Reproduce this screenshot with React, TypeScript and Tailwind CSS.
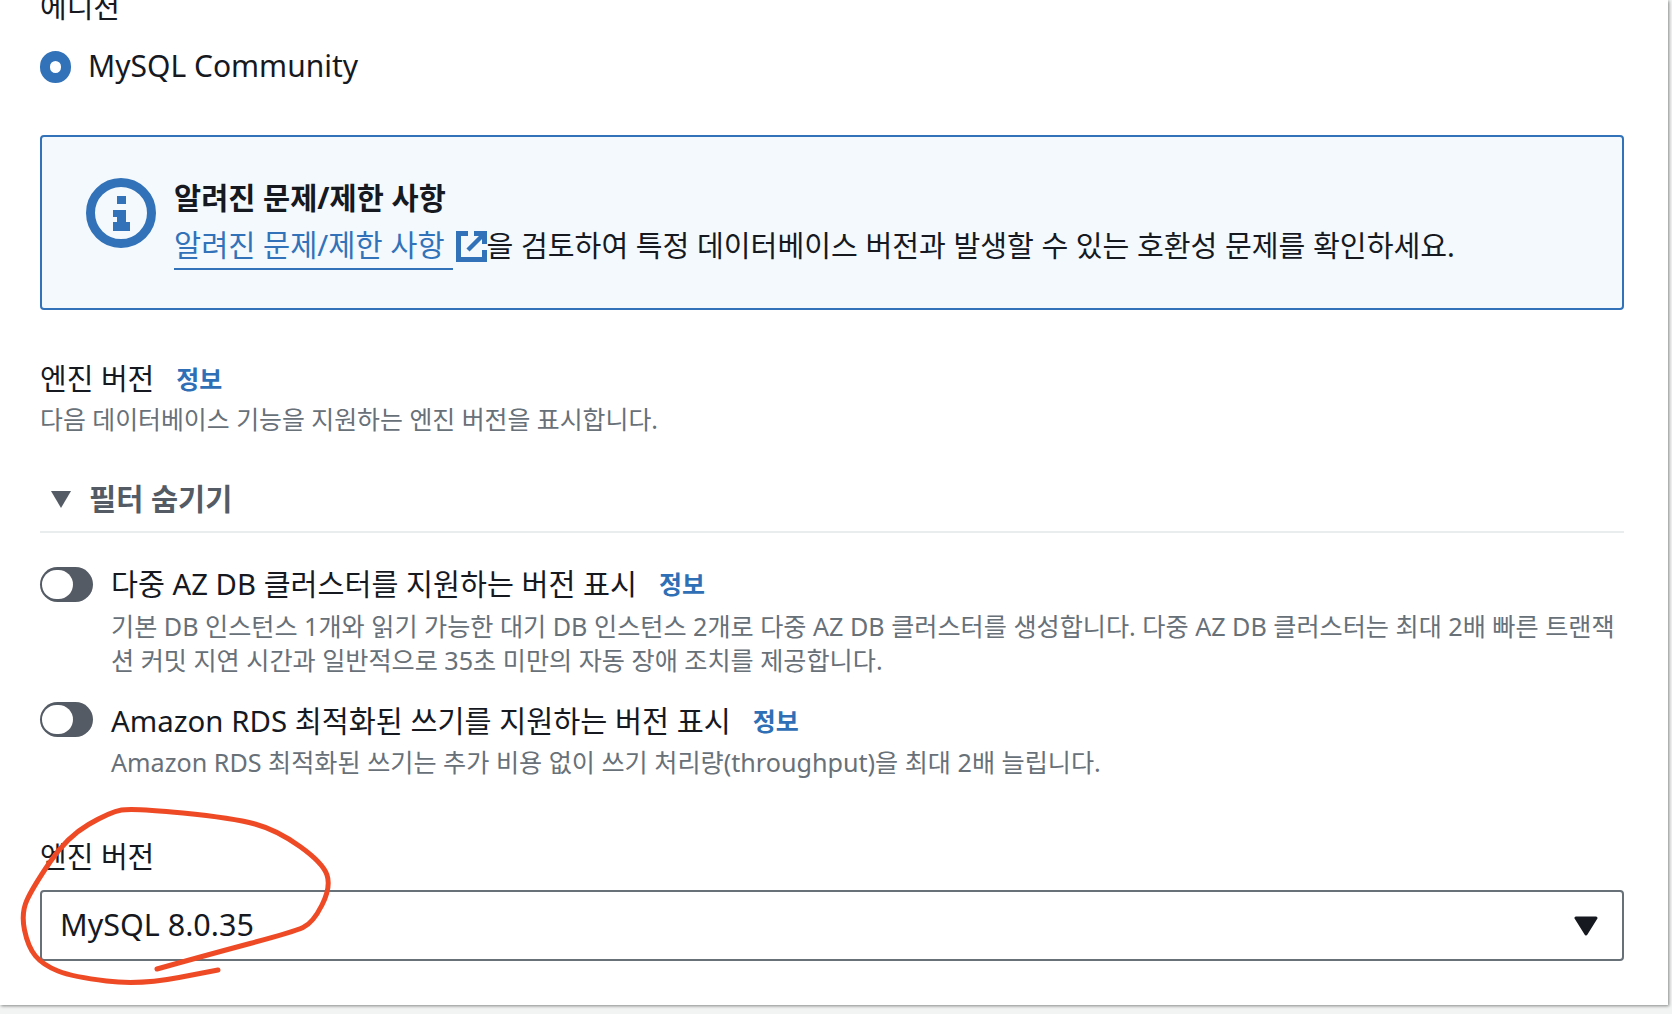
const FONT = "font-['Noto_Sans','Noto_Sans_CJK_KR',sans-serif]"

const SCRIBBLE: [number, number][] = [
  [157, 969], [207, 955], [293, 932], [313, 923], [331, 887], [323, 863], [277, 830], [233, 818],
  [133, 808], [110, 812], [67, 837], [33, 887], [21, 913], [28, 947], [43, 965], [73, 977], [140, 985], [218, 970],
]

function scribblePath(points: [number, number][]) {
  let d = `M${points[0][0]} ${points[0][1]}`
  for (let i = 1; i < points.length - 1; i++) {
    const [x, y] = points[i]
    const [nx, ny] = points[i + 1]
    d += ` Q${x} ${y} ${(x + nx) / 2} ${(y + ny) / 2}`
  }
  const last = points[points.length - 1]
  return d + ` L${last[0]} ${last[1]}`
}

function Info() {
  return <span className="text-[25px] leading-none font-bold text-[#2f6fb5]">정보</span>
}

function Toggle() {
  return (
    <div className="w-[53px] h-[35px] rounded-full bg-[#545b64] flex items-center pl-[2px] shrink-0">
      <div className="w-[31px] h-[29px] rounded-full bg-white" />
    </div>
  )
}

function InfoIcon() {
  return (
    <svg width="70" height="70" viewBox="0 0 70 70" className="shrink-0">
      <circle cx="35" cy="35" r="30.5" fill="none" stroke="#3272b8" strokeWidth="9" />
      <rect x="31" y="18" width="9" height="8" fill="#3272b8" />
      <rect x="27" y="32" width="13" height="7" fill="#3272b8" />
      <rect x="31" y="36" width="9" height="10" fill="#3272b8" />
      <rect x="27" y="44" width="17" height="9" fill="#3272b8" />
    </svg>
  )
}

function ExternalIcon() {
  return (
    <svg width="31" height="31" viewBox="0 0 31 31" className="block shrink-0">
      <path d="M12 2.5H2.5v26h26V19" fill="none" stroke="#3272b8" strokeWidth="5" />
      <path d="M18 2.5h10.5V13" fill="none" stroke="#3272b8" strokeWidth="5" />
      <path d="M27 4 12 19" fill="none" stroke="#3272b8" strokeWidth="4.5" />
    </svg>
  )
}

export default function App() {
  return (
    <div className={`relative w-[1672px] h-[1014px] overflow-hidden bg-[#f2f3f3] text-[#16191f] ${FONT}`}>
      <div className="w-[1668px] h-[1005px] bg-white shadow-[1px_1px_3px_rgba(0,0,0,0.45)] pl-[40px] pr-[44px] overflow-hidden">
        <div className="text-[29px] leading-[40px] -mt-[13px]">에디션</div>

        <div className="flex items-center gap-[17px] mt-[20px] h-[40px]">
          <div className="w-[31px] h-[32px] rounded-full border-[10px] border-[#3272b8] bg-white" />
          <div className="text-[30px] leading-[40px] -mt-[2px]">MySQL Community</div>
        </div>

        <div className="mt-[48px] h-[175px] border-2 border-[#3272b8] rounded-[4px] bg-[#f3f9fd] flex items-start pl-[44px] pt-[41px] gap-[18px]">
          <InfoIcon />
          <div>
            <div className="text-[29.5px] leading-[40px] font-bold">알려진 문제/제한 사항</div>
            <div className="flex items-center text-[29.5px] leading-[46px] mt-[4px]">
              <span className="text-[#3272b8] border-b-2 border-[#3272b8] pr-[8px]">알려진 문제/제한 사항</span>
              <span className="ml-[3px]"><ExternalIcon /></span>
              <span className="text-[29.15px]">을 검토하여 특정 데이터베이스 버전과 발생할 수 있는 호환성 문제를 확인하세요.</span>
            </div>
          </div>
        </div>

        <div className="flex items-center gap-[22px] mt-[49px] h-[40px]">
          <div className="text-[29px] leading-[40px]">엔진 버전</div>
          <Info />
        </div>
        <div className="text-[24.9px] leading-[36px] text-[#687078] mt-[2px]">다음 데이터베이스 기능을 지원하는 엔진 버전을 표시합니다.</div>

        <div className="flex items-center gap-[17px] mt-[43px] h-[40px] pl-[10px] pb-[2px]">
          <svg width="22" height="18" viewBox="0 0 22 18"><path d="M1 1h20L11 18z" fill="#545b64" /></svg>
          <div className="text-[29.5px] leading-[40px] font-bold text-[#545b64]">필터 숨기기</div>
        </div>
        <div className="h-[2px] bg-[#eaeded] mt-[11px]" />

        <div className="flex gap-[18px] mt-[34px]">
          <Toggle />
          <div className="flex-1 min-w-0 -mt-[3px]">
            <div className="flex items-center gap-[22px] h-[40px]">
              <div className="text-[29.3px] leading-[40px]">다중 AZ DB 클러스터를 지원하는 버전 표시</div>
              <Info />
            </div>
            <div className="text-[25.15px] leading-[34px] text-[#687078] mt-[5px]">
              기본 DB 인스턴스 1개와 읽기 가능한 대기 DB 인스턴스 2개로 다중 AZ DB 클러스터를 생성합니다. 다중 AZ DB 클러스터는 최대 2배 빠른 트랜잭션 커밋 지연 시간과 일반적으로 35초 미만의 자동 장애 조치를 제공합니다.
            </div>
          </div>
        </div>

        <div className="flex gap-[18px] mt-[25px]">
          <Toggle />
          <div className="flex-1 min-w-0 -mt-[1px]">
            <div className="flex items-center gap-[22px] h-[40px]">
              <div className="text-[29.4px] leading-[40px]">Amazon RDS 최적화된 쓰기를 지원하는 버전 표시</div>
              <Info />
            </div>
            <div className="text-[25.15px] leading-[34px] text-[#687078] mt-[4px]">
              Amazon RDS 최적화된 쓰기는 추가 비용 없이 쓰기 처리량(throughput)을 최대 2배 늘립니다.
            </div>
          </div>
        </div>

        <div className="text-[29px] leading-[40px] mt-[58px]">엔진 버전</div>
        <div className="mt-[13px] h-[71px] border-2 border-[#687078] rounded-[4px] flex items-center justify-between pl-[18px] pr-[24px]">
          <div className="text-[30.5px] leading-[40px] -mt-[3px]">MySQL 8.0.35</div>
          <svg width="24" height="20" viewBox="0 0 24 20">
            <path d="M2 2h20L12 18z" fill="#16191f" stroke="#16191f" strokeWidth="3" strokeLinejoin="round" />
          </svg>
        </div>
      </div>

      <svg width="1672" height="1014" viewBox="0 0 1672 1014" className="absolute left-0 top-0 pointer-events-none">
        <path d={scribblePath(SCRIBBLE)} fill="none" stroke="#ef4a26" strokeWidth="5" strokeLinecap="round" strokeLinejoin="round" />
      </svg>
    </div>
  )
}
